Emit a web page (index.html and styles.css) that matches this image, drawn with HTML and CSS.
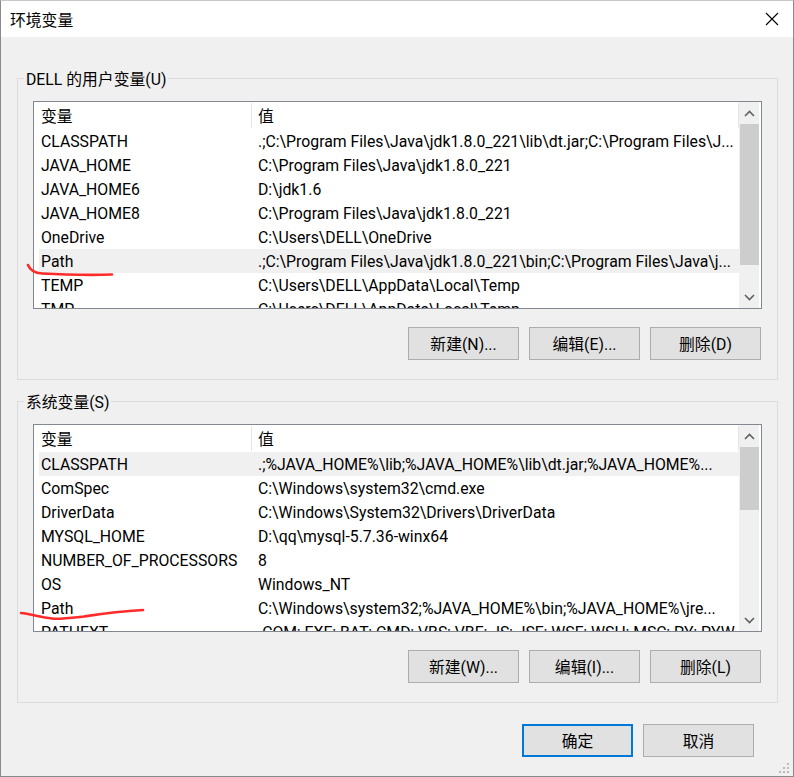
FILE: index.html
```html
<!DOCTYPE html>
<html lang="zh-CN">
<head>
    <meta charset="UTF-8">
    <title>环境变量</title>
    <link rel="stylesheet" href="styles.css">
</head>
<body>

<div class="fenster">
    <div class="titelleiste">
        <span class="titel">环境变量</span>
        <span class="schliessen">
            <svg width="14" height="14" viewBox="0 0 14 14"><path d="M1 1 L13 13 M13 1 L1 13" stroke="#000" stroke-width="1.1" fill="none"/></svg>
        </span>
    </div>

    <div class="inhalt">
        <!-- Benutzervariablen -->
        <div class="gruppe">
            <div class="gruppe-titel">DELL 的用户变量(U)</div>
            <div class="liste">
                <div class="liste-haupt">
                    <div class="kopf">
                        <div class="kopf-name">变量</div>
                        <div class="kopf-wert">值</div>
                    </div>
                    <div class="zeilen">
                        <div class="zeile"><div class="name">CLASSPATH</div><div class="wert">.;C:\Program Files\Java\jdk1.8.0_221\lib\dt.jar;C:\Program Files\J...</div></div>
                        <div class="zeile"><div class="name">JAVA_HOME</div><div class="wert">C:\Program Files\Java\jdk1.8.0_221</div></div>
                        <div class="zeile"><div class="name">JAVA_HOME6</div><div class="wert">D:\jdk1.6</div></div>
                        <div class="zeile"><div class="name">JAVA_HOME8</div><div class="wert">C:\Program Files\Java\jdk1.8.0_221</div></div>
                        <div class="zeile"><div class="name">OneDrive</div><div class="wert">C:\Users\DELL\OneDrive</div></div>
                        <div class="zeile aktiv"><div class="name">Path</div><div class="wert">.;C:\Program Files\Java\jdk1.8.0_221\bin;C:\Program Files\Java\j...</div></div>
                        <div class="zeile"><div class="name">TEMP</div><div class="wert">C:\Users\DELL\AppData\Local\Temp</div></div>
                        <div class="zeile"><div class="name">TMP</div><div class="wert">C:\Users\DELL\AppData\Local\Temp</div></div>
                    </div>
                </div>
                <div class="scrollbar">
                    <div class="pfeil"><svg width="11" height="7" viewBox="0 0 11 7"><path d="M1 6 L5.5 1.5 L10 6" stroke="#606060" stroke-width="1.6" fill="none"/></svg></div>
                    <div class="spur"><div class="daumen daumen-user"></div></div>
                    <div class="pfeil"><svg width="11" height="7" viewBox="0 0 11 7"><path d="M1 1 L5.5 5.5 L10 1" stroke="#606060" stroke-width="1.6" fill="none"/></svg></div>
                </div>
            </div>
            <div class="knoepfe">
                <button class="knopf">新建(N)...</button>
                <button class="knopf">编辑(E)...</button>
                <button class="knopf">删除(D)</button>
            </div>
        </div>

        <!-- Systemvariablen -->
        <div class="gruppe gruppe-system">
            <div class="gruppe-titel">系统变量(S)</div>
            <div class="liste">
                <div class="liste-haupt">
                    <div class="kopf">
                        <div class="kopf-name">变量</div>
                        <div class="kopf-wert">值</div>
                    </div>
                    <div class="zeilen">
                        <div class="zeile aktiv"><div class="name">CLASSPATH</div><div class="wert">.;%JAVA_HOME%\lib;%JAVA_HOME%\lib\dt.jar;%JAVA_HOME%...</div></div>
                        <div class="zeile"><div class="name">ComSpec</div><div class="wert">C:\Windows\system32\cmd.exe</div></div>
                        <div class="zeile"><div class="name">DriverData</div><div class="wert">C:\Windows\System32\Drivers\DriverData</div></div>
                        <div class="zeile"><div class="name">MYSQL_HOME</div><div class="wert">D:\qq\mysql-5.7.36-winx64</div></div>
                        <div class="zeile"><div class="name">NUMBER_OF_PROCESSORS</div><div class="wert">8</div></div>
                        <div class="zeile"><div class="name">OS</div><div class="wert">Windows_NT</div></div>
                        <div class="zeile"><div class="name">Path</div><div class="wert">C:\Windows\system32;%JAVA_HOME%\bin;%JAVA_HOME%\jre...</div></div>
                        <div class="zeile"><div class="name">PATHEXT</div><div class="wert">.COM;.EXE;.BAT;.CMD;.VBS;.VBE;.JS;.JSE;.WSF;.WSH;.MSC;.PY;.PYW</div></div>
                    </div>
                </div>
                <div class="scrollbar">
                    <div class="pfeil"><svg width="11" height="7" viewBox="0 0 11 7"><path d="M1 6 L5.5 1.5 L10 6" stroke="#606060" stroke-width="1.6" fill="none"/></svg></div>
                    <div class="spur"><div class="daumen daumen-system"></div></div>
                    <div class="pfeil"><svg width="11" height="7" viewBox="0 0 11 7"><path d="M1 1 L5.5 5.5 L10 1" stroke="#606060" stroke-width="1.6" fill="none"/></svg></div>
                </div>
            </div>
            <div class="knoepfe">
                <button class="knopf">新建(W)...</button>
                <button class="knopf">编辑(I)...</button>
                <button class="knopf">删除(L)</button>
            </div>
        </div>

        <div class="fusszeile">
            <button class="knopf knopf-standard">确定</button>
            <button class="knopf">取消</button>
        </div>
    </div>

    <!-- rote Markierungen und Größengriff -->
    <svg class="overlay" width="794" height="777" viewBox="0 0 794 777">
        <path d="M28 265 C30 270 34 273 42 273.5 L66 274.5 C85 275 100 275 112 274.5" stroke="#ff2b2b" stroke-width="2.6" fill="none" stroke-linecap="round"/>
        <path d="M21 613 C30 614 40 617 52 618.5 C58 619.5 70 618 84 616.5 C100 614 115 611.5 143 610" stroke="#ff2b2b" stroke-width="2.6" fill="none" stroke-linecap="round"/>
        <g fill="#bcbcbc">
            <rect x="787" y="763" width="2" height="2"/>
            <rect x="783" y="767" width="2" height="2"/>
            <rect x="787" y="767" width="2" height="2"/>
            <rect x="779" y="771" width="2" height="2"/>
            <rect x="783" y="771" width="2" height="2"/>
            <rect x="787" y="771" width="2" height="2"/>
        </g>
    </svg>
</div>

</body>
</html>
```

FILE: styles.css
```css
body {
    margin: 0;
    font-family: Roboto, "Noto Sans CJK SC", sans-serif;
    font-size: 15.8px;
    color: #000;
}
.fenster {
    position: relative;
    width: 794px;
    height: 777px;
    box-sizing: border-box;
    border: 1px solid #8a8a8a;
    border-top-color: #c8c8c8;
    background: #f0f0f0;
    overflow: hidden;
}
.titelleiste {
    display: flex;
    align-items: center;
    height: 36px;
    background: #fff;
    padding-left: 9px;
}
.schliessen {
    margin-left: auto;
    width: 42px;
    height: 36px;
    display: flex;
    align-items: center;
    justify-content: center;
}
.gruppe {
    margin: 41px 15px 0 16px;
    border: 1px solid #dcdcdc;
}
.gruppe-system {
    margin-top: 21px;
}
.gruppe-titel {
    width: fit-content;
    margin: -10px 0 0 6px;
    padding: 0 2px;
    line-height: 22px;
    background: #f0f0f0;
}
.liste {
    display: flex;
    height: 208px;
    box-sizing: border-box;
    margin: 10px 15px 0 15px;
    border: 1px solid #828790;
    background: #fff;
}
.liste-haupt {
    display: flex;
    flex-direction: column;
    width: 705px;
    min-width: 0;
    flex-shrink: 0;
    overflow: hidden;
}
.kopf {
    display: flex;
    height: 27px;
    flex-shrink: 0;
}
.kopf-name,
.kopf-wert {
    display: flex;
    align-items: center;
    margin: 1px 0;
    border-right: 1px solid #e5e5e5;
}
.kopf-name {
    width: 210px;
    padding-left: 7px;
}
.kopf-wert {
    flex: 1;
    padding-left: 6px;
}
.zeilen {
    flex: 1;
    overflow: hidden;
}
.zeile {
    display: flex;
    height: 24px;
    line-height: 25px;
    margin-left: 5px;
    white-space: nowrap;
}
.zeile.aktiv {
    background: #f0f0f0;
}
.name {
    width: 211px;
    padding-left: 2px;
    flex-shrink: 0;
}
.wert {
    min-width: 0;
    padding-left: 6px;
    overflow: hidden;
}
.scrollbar {
    display: flex;
    flex-direction: column;
    flex-shrink: 0;
    width: 20px;
    margin-right: 2px;
    background: #f0f0f0;
}
.pfeil {
    height: 22px;
    display: flex;
    align-items: center;
    justify-content: center;
    flex-shrink: 0;
}
.spur {
    flex: 1;
}
.daumen {
    margin-left: 1px;
    background: #cdcdcd;
}
.daumen-user {
    height: 141px;
}
.daumen-system {
    height: 63px;
}
.knoepfe {
    display: flex;
    justify-content: flex-end;
    gap: 10px;
    margin: 18px 16px 0 0;
    padding-bottom: 19px;
}
.knopf {
    width: 111px;
    height: 33px;
    padding: 0;
    border: 1px solid #adadad;
    background: #e1e1e1;
    font-family: inherit;
    font-size: 15.8px;
    color: #000;
}
.knopf-standard {
    border: 2px solid #0078d7;
}
.fusszeile {
    display: flex;
    justify-content: flex-end;
    gap: 10px;
    margin: 21px 39px 0 0;
}
.overlay {
    position: absolute;
    left: -1px;
    top: -1px;
    pointer-events: none;
}
```
